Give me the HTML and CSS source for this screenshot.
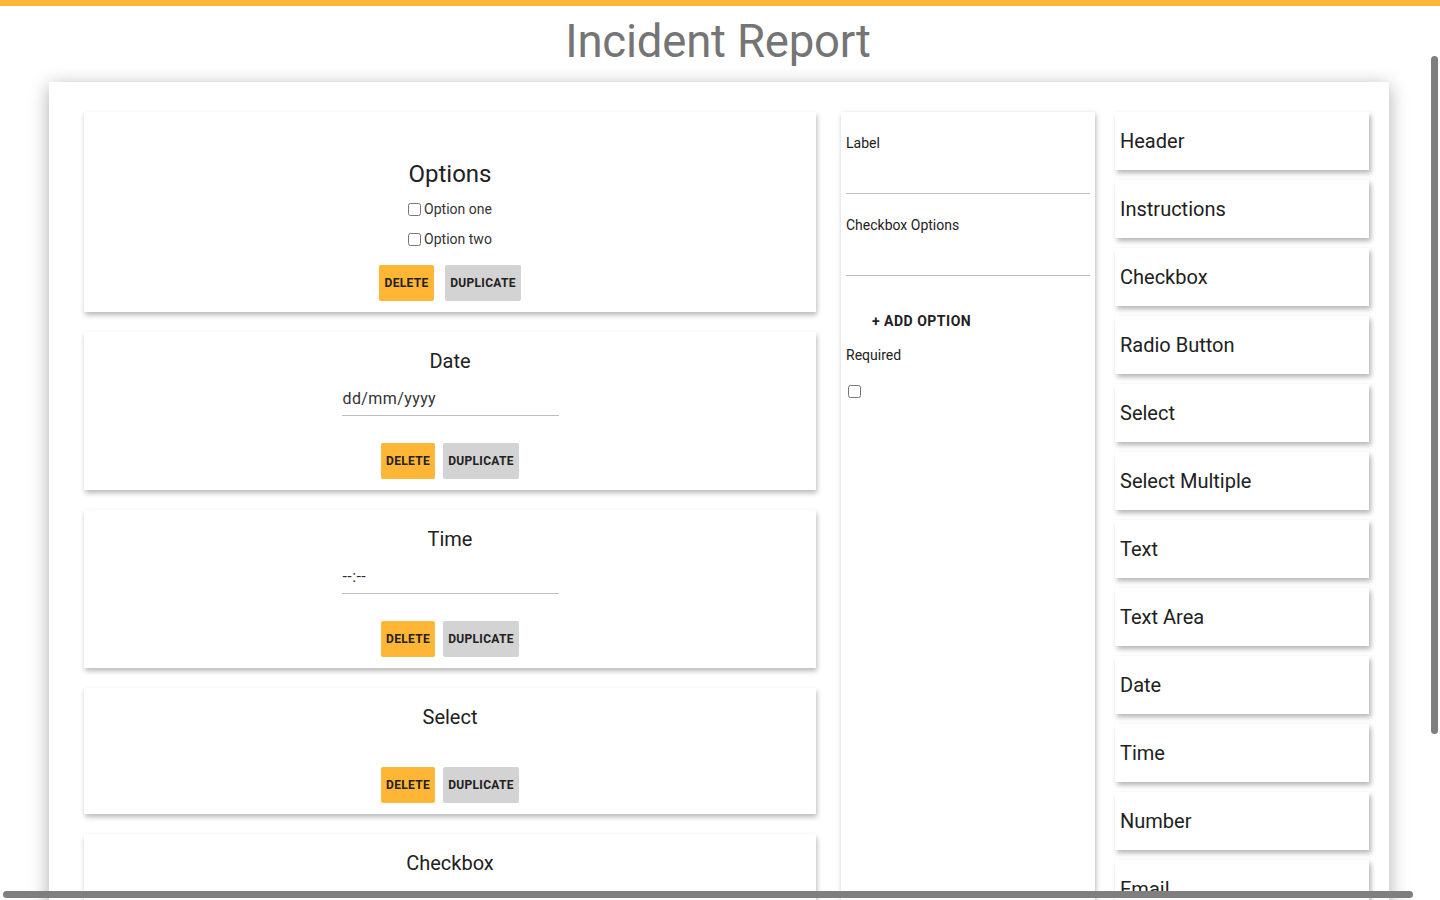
FILE: index.html
```html
<!DOCTYPE html>
<html>
<head>
<meta charset="utf-8">
<title>Incident Report</title>
<link rel="stylesheet" href="styles.css">
</head>
<body>
<div class="topbar"></div>
<h1 class="title">Incident Report</h1>
<main class="sheet">
  <section class="form-col">
    <div class="card card-options">
      <h2 class="card-title card-title-lg">Options</h2>
      <label class="opt"><input type="checkbox"> Option one</label>
      <label class="opt"><input type="checkbox"> Option two</label>
      <div class="actions actions-wide">
        <button class="btn btn-delete">DELETE</button>
        <button class="btn btn-dup">DUPLICATE</button>
      </div>
    </div>
    <div class="card">
      <h2 class="card-title">Date</h2>
      <div class="fake-input">dd/mm/yyyy</div>
      <div class="actions">
        <button class="btn btn-delete">DELETE</button>
        <button class="btn btn-dup">DUPLICATE</button>
      </div>
    </div>
    <div class="card">
      <h2 class="card-title">Time</h2>
      <div class="fake-input fake-time">--:--</div>
      <div class="actions">
        <button class="btn btn-delete">DELETE</button>
        <button class="btn btn-dup">DUPLICATE</button>
      </div>
    </div>
    <div class="card">
      <h2 class="card-title">Select</h2>
      <div class="empty-select"></div>
      <div class="actions">
        <button class="btn btn-delete">DELETE</button>
        <button class="btn btn-dup">DUPLICATE</button>
      </div>
    </div>
    <div class="card card-last">
      <h2 class="card-title">Checkbox</h2>
    </div>
  </section>

  <section class="edit-panel">
    <div class="field-label">Label</div>
    <div class="field-line"></div>
    <div class="field-label">Checkbox Options</div>
    <div class="field-line"></div>
    <button class="add-option">+ ADD OPTION</button>
    <div class="field-label req">Required</div>
    <input class="req-box" type="checkbox">
  </section>

  <section class="palette">
    <div class="tool">Header</div>
    <div class="tool">Instructions</div>
    <div class="tool">Checkbox</div>
    <div class="tool">Radio Button</div>
    <div class="tool">Select</div>
    <div class="tool">Select Multiple</div>
    <div class="tool">Text</div>
    <div class="tool">Text Area</div>
    <div class="tool">Date</div>
    <div class="tool">Time</div>
    <div class="tool">Number</div>
    <div class="tool">Email</div>
  </section>
</main>
<div class="vscroll"></div>
<div class="hscroll"></div>
</body>
</html>
```

FILE: styles.css
```css
html, body {
  margin: 0;
  padding: 0;
  height: 100%;
  overflow: hidden;
}
body {
  font-family: Roboto, "Liberation Sans", Arial, sans-serif;
  color: #212121;
  background: #fff;
}
.topbar {
  height: 6px;
  background: #ffb536;
}
.title {
  margin: 0;
  height: 76px;
  line-height: 72px;
  padding-right: 4px;
  text-align: center;
  font-size: 45.5px;
  font-weight: 400;
  color: #757575;
  letter-spacing: -0.2px;
}
.sheet {
  margin: 0 51px 0 49px;
  width: 1340px;
  box-sizing: border-box;
  background: #fff;
  box-shadow: 0 4px 18px rgba(0, 0, 0, 0.32);
  padding: 30px 20px 0 35px;
  display: flex;
  align-items: flex-start;
  height: 1000px;
}
.form-col {
  width: 732px;
  display: flex;
  flex-direction: column;
  gap: 20px;
}
.card {
  background: #fff;
  box-shadow: 1px 3px 5px rgba(0, 0, 0, 0.28);
  padding: 14px 0 11px;
  display: flex;
  flex-direction: column;
  align-items: center;
}
.card-options {
  padding-top: 46px;
}
.card-last {
  height: 200px;
}
.card-title {
  margin: 0;
  font-size: 20px;
  line-height: 30px;
  font-weight: 400;
  color: #212121;
}
.card-title-lg {
  font-size: 24px;
  line-height: 32px;
}
.opt {
  display: flex;
  align-items: center;
  height: 30px;
  font-size: 14px;
  color: #333;
}
.opt input {
  margin: 0 3px 0 0;
  width: 13px;
  height: 13px;
}
.card-options .opt:first-of-type {
  margin-top: 4px;
}
.fake-input {
  width: 216px;
  height: 31px;
  margin-top: 8px;
  border-bottom: 1px solid #bdbdbd;
  font-size: 16px;
  line-height: 30px;
  letter-spacing: 0.4px;
  color: #333;
  padding-left: 1px;
  box-sizing: content-box;
}
.fake-time {
  font-size: 16px;
}
.empty-select {
  height: 0;
  margin-top: 8px;
}
.actions {
  display: flex;
  gap: 8px;
  margin-top: 27px;
}
.actions-wide {
  gap: 11px;
  margin-top: 11px;
}
.btn {
  height: 36px;
  border: none;
  border-radius: 2px;
  padding: 0 5px;
  font-family: Roboto, "Liberation Sans", Arial, sans-serif;
  font-size: 12px;
  font-weight: 700;
  letter-spacing: 0.3px;
  color: #212121;
}
.btn-delete {
  background: #ffb536;
  width: 54px;
}
.actions-wide .btn-delete {
  width: 55px;
}
.btn-dup {
  background: #d3d3d3;
  width: 76px;
}
.edit-panel {
  width: 254px;
  margin-left: 25px;
  height: 900px;
  box-sizing: border-box;
  background: #fff;
  box-shadow: 1px 2px 5px rgba(0, 0, 0, 0.28);
  padding: 21px 5px 0;
  display: flex;
  flex-direction: column;
  align-items: flex-start;
}
.field-label {
  font-size: 14px;
  line-height: 20px;
  color: #212121;
}
.field-line {
  align-self: stretch;
  height: 40px;
  border-bottom: 1px solid #bdbdbd;
  margin-bottom: 21px;
}
.add-option {
  margin: 6px 0 0 10px;
  height: 36px;
  border: none;
  background: transparent;
  padding: 0 16px;
  font-family: Roboto, "Liberation Sans", Arial, sans-serif;
  font-size: 14px;
  font-weight: 700;
  letter-spacing: 0.5px;
  color: #212121;
}
.req {
  margin-top: 6px;
}
.req-box {
  margin: 20px 0 0 2px;
  width: 13px;
  height: 13px;
}
.palette {
  width: 254px;
  margin-left: 20px;
  display: flex;
  flex-direction: column;
  gap: 10px;
}
.tool {
  height: 58px;
  background: #fff;
  box-shadow: 2px 3px 5px rgba(0, 0, 0, 0.3);
  display: flex;
  align-items: center;
  padding-left: 5px;
  font-size: 20px;
  color: #212121;
}
.vscroll {
  position: fixed;
  left: 1431px;
  top: 56px;
  width: 7px;
  height: 678px;
  border-radius: 4px;
  background: #7f7f7f;
}
.hscroll {
  position: fixed;
  left: 3px;
  top: 891px;
  width: 1410px;
  height: 7px;
  border-radius: 4px;
  background: #7f7f7f;
}
```
